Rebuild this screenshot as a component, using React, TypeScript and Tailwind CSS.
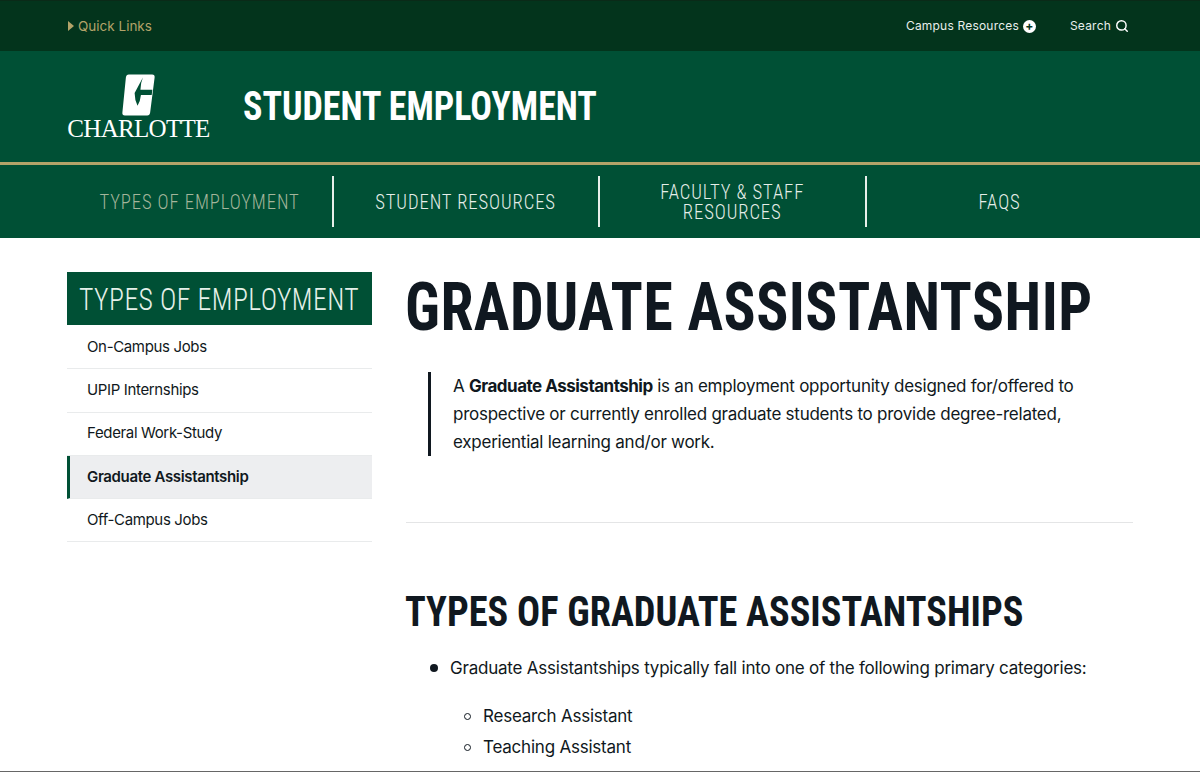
import { Search } from "lucide-react";

const navItems = ["TYPES OF EMPLOYMENT", "STUDENT RESOURCES", "FACULTY & STAFF RESOURCES", "FAQS"];
const sideItems = ["On-Campus Jobs", "UPIP Internships", "Federal Work-Study", "Graduate Assistantship", "Off-Campus Jobs"];

// headings use a narrower face than Roboto's 75% width, so they get squeezed a bit more
const condensed = "font-['Roboto',sans-serif] [font-stretch:75%]";

function Logo() {
  return (
    <div className="flex w-[143px] flex-col items-center">
      <svg viewBox="0 0 34 42" className="h-[42px] w-[33px]">
        <path fill="#fff" d="M7 0H31Q34 0 33.6 3L29 39Q28.6 42 26 42H3Q0 42 .4 39L4 3Q4.4 0 7 0Z" />
        <path fill="#005035" d="M21.5 3L13 19Q13 26 16 32Q19 27 19.5 21H30.6L31.3 15.5H19Q19 9 21.5 3Z" />
      </svg>
      <div className="mt-[3px] font-['Liberation_Serif',serif] text-[25px] leading-[20px] tracking-[-0.7px] text-white">CHARLOTTE</div>
    </div>
  );
}

export default function App() {
  return (
    <div className="h-[772px] overflow-hidden border-b border-[#666] bg-white font-['Inter',sans-serif] text-[#101820]">
      <div className="flex h-[51px] items-center justify-between border-t border-[#0a2a18] bg-[#03341c] px-[67px] text-[12px] tracking-[0.2px]">
        <div className="flex items-center gap-[4px] text-[13.5px] tracking-normal text-[#b3a369]">
          <span className="ml-px h-0 w-0 border-y-[5px] border-l-[6px] border-y-transparent border-l-[#b3a369]" />
          Quick Links
        </div>
        <div className="flex items-center pr-[4px] text-[#e8efeb]">
          <span>Campus Resources</span>
          <span className="ml-[4px] flex h-[13px] w-[13px] items-center justify-center rounded-full bg-white text-[12px] leading-none font-bold text-[#03341c]">+</span>
          <span className="ml-[34px]">Search</span>
          <Search className="ml-[4px] h-[14px] w-[14px] text-white" strokeWidth={2.5} />
        </div>
      </div>

      <div className="flex h-[111px] items-center bg-[#005035] px-[67px]">
        <Logo />
        <h1 className={`ml-[33px] origin-left scale-x-[0.9] text-[40px] font-bold whitespace-nowrap text-white ${condensed}`}>STUDENT EMPLOYMENT</h1>
      </div>
      <div className="h-[3px] bg-[#b3a369]" />

      <nav className="grid h-[73px] grid-cols-4 items-center bg-[#005035] px-[67px]">
        {navItems.map((item, i) => (
          <div
            key={item}
            className={`flex h-[51px] items-center justify-center px-[10px] text-center ${i === 0 ? "text-[#a3b59b]" : "text-[#e6eee9]"} ${
              i < 3 ? "border-r-2 border-[#e8eee9]" : ""
            }`}
          >
            <span className={`scale-x-[0.89] text-[21px] leading-[20px] font-light tracking-[1px] ${condensed}`}>{item}</span>
          </div>
        ))}
      </nav>

      <div className="flex gap-[34px] px-[67px] pt-[34px]">
        <aside className="w-[305px] shrink-0">
          <div className="flex h-[53px] items-center bg-[#005035] pl-[12px]">
            <span className={`origin-left scale-x-[0.866] text-[32px] font-light tracking-[0.5px] whitespace-nowrap text-[#e6f0ea] ${condensed}`}>TYPES OF EMPLOYMENT</span>
          </div>
          <div className="pt-px">
            {sideItems.map((item) => {
              const active = item === "Graduate Assistantship";
              return (
                <div
                  key={item}
                  className={`flex h-[43.3px] items-center border-b border-[#e9ebec] text-[15px] tracking-[-0.35px] ${
                    active ? "border-l-[3px] border-l-[#005035] bg-[#edeef0] pl-[17px] font-semibold" : "pl-[20px]"
                  }`}
                >
                  {item}
                </div>
              );
            })}
          </div>
        </aside>

        <main className="min-w-0 flex-1">
          <h2 className={`-ml-px origin-left translate-y-px scale-x-[0.891] text-[67px] leading-[68px] font-bold tracking-[0.5px] whitespace-nowrap ${condensed}`}>GRADUATE ASSISTANTSHIP</h2>
          <div className="mt-[32px] ml-[22px] border-l-[3px] border-[#101820] pl-[22px] text-[17px] leading-[28px] tracking-[-0.25px]">
            A <strong className="tracking-[-0.5px]">Graduate Assistantship</strong> is an employment opportunity designed for/offered to
            <br />
            prospective or currently enrolled graduate students to provide degree-related,
            <br />
            experiential learning and/or work.
          </div>
          <hr className="mt-[66px] border-[#e4e5e6]" />
          <h3 className={`mt-[64px] -ml-px origin-left scale-x-[0.913] text-[42px] leading-[50px] font-bold whitespace-nowrap ${condensed}`}>TYPES OF GRADUATE ASSISTANTSHIPS</h3>
          <ul className="mt-[17px] pl-[24px] text-[17px] leading-[28px] tracking-[-0.22px]">
            <li className="flex items-center gap-[12px]">
              <span className="h-[8px] w-[8px] shrink-0 rounded-full bg-[#101820]" />
              Graduate Assistantships typically fall into one of the following primary categories:
            </li>
          </ul>
          <ul className="mt-[19px] pl-[58px] text-[17px] leading-[31px] tracking-[-0.22px]">
            {["Research Assistant", "Teaching Assistant"].map((item) => (
              <li key={item} className="flex items-center gap-[12px]">
                <span className="h-[7px] w-[7px] shrink-0 rounded-full border-[1.5px] border-[#101820]" />
                {item}
              </li>
            ))}
          </ul>
        </main>
      </div>
    </div>
  );
}
